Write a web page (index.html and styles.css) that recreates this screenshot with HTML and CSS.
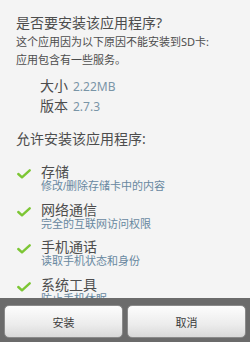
FILE: index.html
```html
<!DOCTYPE html>
<html>
<head>
    <title>安装应用程序</title>
    <link rel="stylesheet" href="styles.css">
</head>
<body>
    <div class="page">
        <div class="scroll">
            <h1 class="title">是否要安装该应用程序?</h1>
            <p class="note">这个应用因为以下原因不能安装到SD卡:</p>
            <p class="note">应用包含有一些服务。</p>

            <div class="info">
                <div class="info-row"><span class="info-label">大小</span><span class="info-value">2.22MB</span></div>
                <div class="info-row"><span class="info-label">版本</span><span class="info-value">2.7.3</span></div>
            </div>

            <h2 class="section">允许安装该应用程序:</h2>

            <ul class="perms">
                <li class="perm">
                    <svg class="check" width="14" height="10" viewBox="0 0 14 10"><path d="M1.3 5 L5 8.3 L12.7 1.3" fill="none" stroke="#7cc634" stroke-width="2.4" stroke-linecap="round" stroke-linejoin="round"/></svg>
                    <div class="perm-text">
                        <div class="perm-name">存储</div>
                        <div class="perm-desc">修改/删除存储卡中的内容</div>
                    </div>
                </li>
                <li class="perm">
                    <svg class="check" width="14" height="10" viewBox="0 0 14 10"><path d="M1.3 5 L5 8.3 L12.7 1.3" fill="none" stroke="#7cc634" stroke-width="2.4" stroke-linecap="round" stroke-linejoin="round"/></svg>
                    <div class="perm-text">
                        <div class="perm-name">网络通信</div>
                        <div class="perm-desc">完全的互联网访问权限</div>
                    </div>
                </li>
                <li class="perm">
                    <svg class="check" width="14" height="10" viewBox="0 0 14 10"><path d="M1.3 5 L5 8.3 L12.7 1.3" fill="none" stroke="#7cc634" stroke-width="2.4" stroke-linecap="round" stroke-linejoin="round"/></svg>
                    <div class="perm-text">
                        <div class="perm-name">手机通话</div>
                        <div class="perm-desc">读取手机状态和身份</div>
                    </div>
                </li>
                <li class="perm">
                    <svg class="check" width="14" height="10" viewBox="0 0 14 10"><path d="M1.3 5 L5 8.3 L12.7 1.3" fill="none" stroke="#7cc634" stroke-width="2.4" stroke-linecap="round" stroke-linejoin="round"/></svg>
                    <div class="perm-text">
                        <div class="perm-name">系统工具</div>
                        <div class="perm-desc">防止手机休眠</div>
                    </div>
                </li>
            </ul>
        </div>

        <div class="bar">
            <button class="btn">安装</button>
            <button class="btn">取消</button>
        </div>
    </div>
</body>
</html>
```

FILE: styles.css
```css
body {
    margin: 0;
    background-color: #f4f4f4;
    font-family: "Noto Sans", "Noto Sans CJK SC", sans-serif;
    color: #4d4d4d;
}
.page {
    width: 250px;
    height: 342px;
    display: flex;
    flex-direction: column;
}
.scroll {
    height: 298px;
    overflow: hidden;
    padding: 13px 0 0 16px;
    box-sizing: border-box;
}
.title {
    margin: 0;
    font-size: 14px;
    font-weight: normal;
    line-height: 20px;
}
.note {
    margin: 0;
    font-size: 11px;
    line-height: 18px;
}
.info {
    margin-top: 7px;
    padding-left: 24px;
}
.info-row {
    display: flex;
    align-items: baseline;
    gap: 5px;
    line-height: 19px;
}
.info-label {
    font-size: 14px;
}
.info-value {
    font-size: 12px;
    color: #7a95a7;
}
.section {
    margin: 13px 0 0 0;
    font-size: 14px;
    font-weight: normal;
    line-height: 20px;
}
.perms {
    list-style: none;
    margin: 16px 0 0 0;
    padding: 0;
}
.perm {
    display: flex;
    align-items: flex-start;
    margin-bottom: 9.5px;
}
.check {
    margin: 4px 10px 0 1px;
    flex-shrink: 0;
}
.perm-name, .perm-desc {
    font-family: "Liberation Sans", "Noto Sans CJK SC", sans-serif;
}
.perm-name {
    font-size: 14px;
    line-height: 15px;
}
.perm-desc {
    font-size: 11px;
    line-height: 13px;
    color: #6888a0;
}
.bar {
    flex: 1;
    display: flex;
    gap: 4px;
    padding: 7px 4px 4px 4px;
    background-color: #6b6b6b;
}
.btn {
    flex: 1;
    height: 33px;
    border: 1px solid #8a8a8a;
    border-radius: 5px;
    background: linear-gradient(#fdfdfd, #ececec 60%, #d9d9d9);
    font-family: "Noto Sans", "Noto Sans CJK SC", sans-serif;
    font-size: 11px;
    color: #3a3a3a;
}
```
